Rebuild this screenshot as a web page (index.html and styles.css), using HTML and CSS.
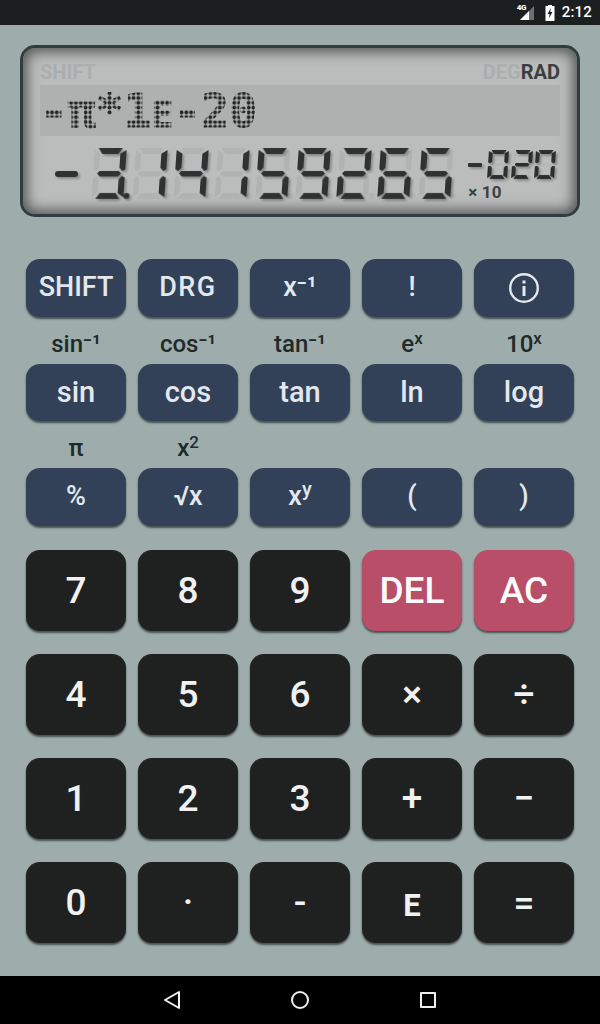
FILE: index.html
```html
<!DOCTYPE html>
<html lang="en">
<head>
<meta charset="utf-8">
<title>Scientific Calculator</title>
<link rel="stylesheet" href="styles.css">
</head>
<body>
<header class="status">
  <span class="signal"><span class="net">4G</span>
    <svg width="16" height="14" viewBox="0 0 16 14"><path class="sig-off" d="M15 0V14H1z"/><path class="sig-on" d="M10 5V14H1z"/></svg>
  </span>
  <svg class="batt" width="10" height="16" viewBox="0 0 10 16"><path class="batt-body" d="M3 0h4v1h2.500v15H.500V1H3z"/><path class="batt-bolt" d="M5.800 3 2.600 9h2l-.6 4.500L7.400 7H5.300z"/></svg>
  <span class="clock">2:12</span>
</header>

<main class="app">
  <section class="lcd">
    <div class="flags">
      <span class="flag">SHIFT</span>
      <span class="modes"><span class="flag">DEG</span><span class="flag on">RAD</span></span>
    </div>
    <div class="matrix"><span class="matrix-text">-π*1<span class="matrix-e">E</span>-20</span></div>
    <div class="number">
      <span class="minus">-</span>
      <span class="digits">
        <span class="digit dp-on" data-v="3">3.</span>
        <span class="digit dp" data-v="1">1</span>
        <span class="digit dp" data-v="4">4</span>
        <span class="digit dp" data-v="1">1</span>
        <span class="digit dp" data-v="5">5</span>
        <span class="digit dp" data-v="9">9</span>
        <span class="digit dp" data-v="2">2</span>
        <span class="digit dp" data-v="6">6</span>
        <span class="digit dp" data-v="5">5</span>
      </span>
      <div class="exponent">
        <div class="exp-row">
          <span class="minus small">-</span>
          <span class="digit small" data-v="0">0</span>
          <span class="digit small" data-v="2">2</span>
          <span class="digit small" data-v="0">0</span>
        </div>
        <div class="times">× 10</div>
      </div>
    </div>
  </section>

  <section class="keys sci">
    <div class="cell"><button class="key blue">SHIFT</button></div>
    <div class="cell"><button class="key blue spaced">DRG</button></div>
    <div class="cell"><button class="key blue">x⁻¹</button></div>
    <div class="cell"><button class="key blue">!</button></div>
    <div class="cell"><button class="key blue">
      <svg width="32" height="32" viewBox="0 0 32 32"><circle class="info-ring" cx="16" cy="16" r="13.800"/><rect class="info-i" x="14.500" y="14" width="3" height="10"/><rect class="info-i" x="14.500" y="8.500" width="3" height="3"/></svg>
    </button></div>

    <div class="cell"><div class="lab">sin⁻¹</div><button class="key blue lc">sin</button></div>
    <div class="cell"><div class="lab">cos⁻¹</div><button class="key blue lc">cos</button></div>
    <div class="cell"><div class="lab">tan⁻¹</div><button class="key blue lc">tan</button></div>
    <div class="cell"><div class="lab">e<sup>x</sup></div><button class="key blue lc">ln</button></div>
    <div class="cell"><div class="lab">10<sup>x</sup></div><button class="key blue lc">log</button></div>

    <div class="cell"><div class="lab">π</div><button class="key blue">%</button></div>
    <div class="cell"><div class="lab">x<sup>2</sup></div><button class="key blue">√x</button></div>
    <div class="cell"><div class="lab"></div><button class="key blue"><span>x<sup>y</sup></span></button></div>
    <div class="cell"><div class="lab"></div><button class="key blue">(</button></div>
    <div class="cell"><div class="lab"></div><button class="key blue">)</button></div>
  </section>

  <section class="keys pad">
    <button class="key big dark">7</button>
    <button class="key big dark">8</button>
    <button class="key big dark">9</button>
    <button class="key big red">DEL</button>
    <button class="key big red">AC</button>
    <button class="key big dark">4</button>
    <button class="key big dark">5</button>
    <button class="key big dark">6</button>
    <button class="key big dark">×</button>
    <button class="key big dark">÷</button>
    <button class="key big dark">1</button>
    <button class="key big dark">2</button>
    <button class="key big dark">3</button>
    <button class="key big dark">+</button>
    <button class="key big dark">−</button>
    <button class="key big dark">0</button>
    <button class="key big dark">·</button>
    <button class="key big dark">-</button>
    <button class="key big dark exp-key">E</button>
    <button class="key big dark">=</button>
  </section>
</main>

<nav class="navbar">
  <svg width="18" height="20" viewBox="0 0 18 20"><path class="nav-icon" d="M16 2V18L2 10z"/></svg>
  <svg width="20" height="20" viewBox="0 0 20 20"><circle class="nav-icon" cx="10" cy="10" r="8"/></svg>
  <svg width="18" height="18" viewBox="0 0 18 18"><rect class="nav-icon" x="2" y="2" width="14" height="14"/></svg>
</nav>
<script src="app.js"></script>
</body>
</html>
```
FILE: styles.css
```css
* { box-sizing: border-box; }
html, body { margin: 0; padding: 0; }
body {
  width: 600px;
  height: 1024px;
  display: flex;
  flex-direction: column;
  overflow: hidden;
  font-family: Roboto, "Liberation Sans", sans-serif;
  background: #9eadac;
}

/* status bar */
.status {
  height: 25px;
  flex: none;
  background: #1c1f1f;
  display: flex;
  align-items: center;
  justify-content: flex-end;
  padding-right: 8px;
  color: #fff;
}
.signal { position: relative; width: 17px; height: 14px; margin-right: 9px; }
.signal svg { display: block; margin-top: 0; }
.net { position: absolute; left: -2px; top: -3px; font-size: 8px; font-weight: 900; letter-spacing: -.4px; line-height: 10px; }
.sig-off { fill: #6e7070; }
.sig-on { fill: #fff; }
.batt { display: block; margin-right: 7px; }
.batt-body { fill: #fff; }
.batt-bolt { fill: #1c1f1f; }
.clock { font-size: 15px; font-weight: 500; line-height: 25px; letter-spacing: .2px; }

/* main */
.app { flex: 1; display: flex; flex-direction: column; padding: 20px 26px 0; }

/* LCD */
.lcd {
  margin: 0 -6px;
  height: 172px;
  flex: none;
  border: 3px solid #2f3d3f;
  border-radius: 15px;
  background: #babdbc;
  box-shadow: inset 0 0 13px 4px rgba(0,0,0,.55);
  padding: 12px 17px 0;
}
.flags { display: flex; justify-content: space-between; height: 25px; align-items: center; }
.flag { font-size: 20px; font-weight: 700; color: #abaeae; line-height: 25px; }
.flag.on { color: #3a3e3f; }
.matrix {
  height: 51px;
  background: #aeb1b0;
  display: flex;
  align-items: center;
}
.matrix-text {
  font-family: "DejaVu Sans Mono", monospace;
  font-weight: 700;
  font-size: 46px;
  letter-spacing: .2px;
  line-height: 51px;
  margin-top: 4px;
  color: #232626;
  white-space: nowrap;
  -webkit-text-stroke: 1px #232626;
  -webkit-mask-image: radial-gradient(circle at center, #000 1.6px, transparent 2.3px);
  mask-image: radial-gradient(circle at center, #000 1.6px, transparent 2.3px);
  -webkit-mask-size: 4.8px 4.8px;
  mask-size: 4.8px 4.8px;
}
.matrix-e { font-size: 36px; }

.number { display: flex; margin-top: 12px; padding-left: 15px; height: 51px; }
.minus {
  flex: none;
  width: 23px;
  height: 6px;
  margin-top: 23px;
  margin-right: 15px;
  background: #2f3232;
  border-radius: 3px;
  color: transparent;
  font-size: 6px;
  line-height: 6px;
  filter: drop-shadow(2px 2px 1px rgba(0,0,0,.25));
}
.minus.small { width: 14px; height: 4px; margin: 13px 6px 0 0; border-radius: 1px; font-size: 4px; line-height: 4px; }
.digits { display: flex; gap: 8.900px; }
.digit {
  position: relative;
  flex: none;
  display: block;
  width: 32px;
  height: 51px;
  transform: skewX(-4deg);
  color: transparent;
  font-size: 40px;
  line-height: 51px;
  text-align: center;
}
.layer { position: absolute; inset: 0; display: block; }
.layer.lit { filter: drop-shadow(2px 2px 1px rgba(0,0,0,.28)); }
.seg { position: absolute; display: block; background: #b0b3b2; }
.lit .seg { background: #2f3232; }
.seg.a, .seg.g, .seg.d { left: 4px; width: 24px; height: 6px; }
.seg.a { top: 0; clip-path: polygon(0 0,100% 0,83% 100%,17% 100%); }
.seg.g { top: 22.500px; clip-path: polygon(0 50%,12% 0,88% 0,100% 50%,88% 100%,12% 100%); }
.seg.d { bottom: 0; clip-path: polygon(17% 0,83% 0,100% 100%,0 100%); }
.seg.b, .seg.c, .seg.e, .seg.f { width: 6px; height: 21px; }
.seg.f, .seg.e { left: 0; }
.seg.b, .seg.c { right: 0; }
.seg.f, .seg.b { top: 2px; }
.seg.e, .seg.c { bottom: 2px; }
.seg.f { clip-path: polygon(0 0,100% 18%,100% 84%,50% 100%,0 92%); }
.seg.e { clip-path: polygon(0 8%,50% 0,100% 16%,100% 82%,0 100%); }
.seg.b { clip-path: polygon(100% 0,0 18%,0 84%,50% 100%,100% 92%); }
.seg.c { clip-path: polygon(100% 8%,50% 0,0 16%,0 82%,100% 100%); }
.point { position: absolute; right: -6px; bottom: 0; width: 6px; height: 6px; border-radius: 50%; background: #b1b4b3; }
.lit .point { background: #2f3232; }

.digit.small { width: 20px; height: 29px; margin-right: 3.500px; font-size: 22px; line-height: 29px; }
.digit.small .seg { background: #b5b8b7; }
.digit.small .lit .seg { background: #2b2e2e; }
.digit.small .seg.a, .digit.small .seg.g, .digit.small .seg.d { left: 2.500px; width: 15px; height: 4px; }
.digit.small .seg.g { top: 12.500px; }
.digit.small .seg.b, .digit.small .seg.c, .digit.small .seg.e, .digit.small .seg.f { width: 4px; height: 12.500px; }
.digit.small .seg.f, .digit.small .seg.b { top: 1px; }
.digit.small .seg.e, .digit.small .seg.c { bottom: 1px; }

.exponent { margin-left: 16px; padding-top: 2px; flex: none; }
.exp-row { display: flex; height: 29px; }
.times { font-size: 17px; font-weight: 700; color: #3d4141; line-height: 18px; margin-top: 4px; letter-spacing: .2px; }

/* keys */
.keys { display: grid; grid-template-columns: repeat(5, 100px); column-gap: 12px; }
.sci { margin-top: 42px; }
.cell { display: flex; flex-direction: column; }
.lab {
  height: 47px;
  padding-top: 14px;
  text-align: center;
  font-size: 24px;
  font-weight: 500;
  line-height: 26px;
  color: #1f2a2a;
}
.lab sup { font-size: 17px; line-height: 0; vertical-align: 8px; }
.key {
  display: flex;
  align-items: center;
  justify-content: center;
  border: 0;
  padding: 0;
  width: 100px;
  height: 57.500px;
  border-radius: 14px;
  font-family: inherit;
  font-size: 27px;
  font-weight: 500;
  line-height: 1;
  box-shadow: 0 2px 2px rgba(40,50,50,.75);
}
.key sup { font-size: 20px; line-height: 0; vertical-align: 9px; }
.lc { font-size: 29px; }
.spaced { letter-spacing: 1.500px; }
.blue { background: #324158; color: #e3e8ee; }
.dark { background: #1f2120; color: #f1f1f1; }
.red { background: #b94e68; color: #fbfbfb; }
.big { height: 81px; font-size: 37px; }
.exp-key { font-size: 31px; font-weight: 700; padding-top: 6px; }
.info-ring { fill: none; stroke: #e3e8ee; stroke-width: 2.400; }
.info-i { fill: #e3e8ee; }
.pad { margin-top: 24.500px; row-gap: 23px; }

/* navigation */
.navbar {
  height: 48px;
  flex: none;
  background: #000;
  display: grid;
  grid-template-columns: repeat(3, 128px);
  justify-content: center;
  justify-items: center;
  align-items: center;
}
.navbar svg { display: block; }
.nav-icon { fill: none; stroke: #eee; stroke-width: 2; stroke-linejoin: round; }
```
FILE: app.js
```js
// Builds the seven-segment cells of the LCD from each digit's value.
var MAP = { 0: 'abcdef', 1: 'bc', 2: 'abged', 3: 'abgcd', 4: 'fgbc', 5: 'afgcd', 6: 'afgecd', 7: 'abc', 8: 'abcdefg', 9: 'abcdfg' };

function addSeg(layer, s) {
  var seg = document.createElement('i');
  seg.className = 'seg ' + s;
  layer.appendChild(seg);
}
function addLayer(parent, cls) {
  var layer = document.createElement('i');
  layer.className = 'layer ' + cls;
  parent.appendChild(layer);
  return layer;
}
function addPoint(layer) {
  var p = document.createElement('i');
  p.className = 'point';
  layer.appendChild(p);
}

document.querySelectorAll('.digit').forEach(function (el) {
  var ghost = addLayer(el, 'ghost');
  var lit = addLayer(el, 'lit');
  'abcdefg'.split('').forEach(function (s) { addSeg(ghost, s); });
  MAP[el.dataset.v].split('').forEach(function (s) { addSeg(lit, s); });
  if (el.classList.contains('dp')) addPoint(ghost);
  if (el.classList.contains('dp-on')) addPoint(lit);
});
```
